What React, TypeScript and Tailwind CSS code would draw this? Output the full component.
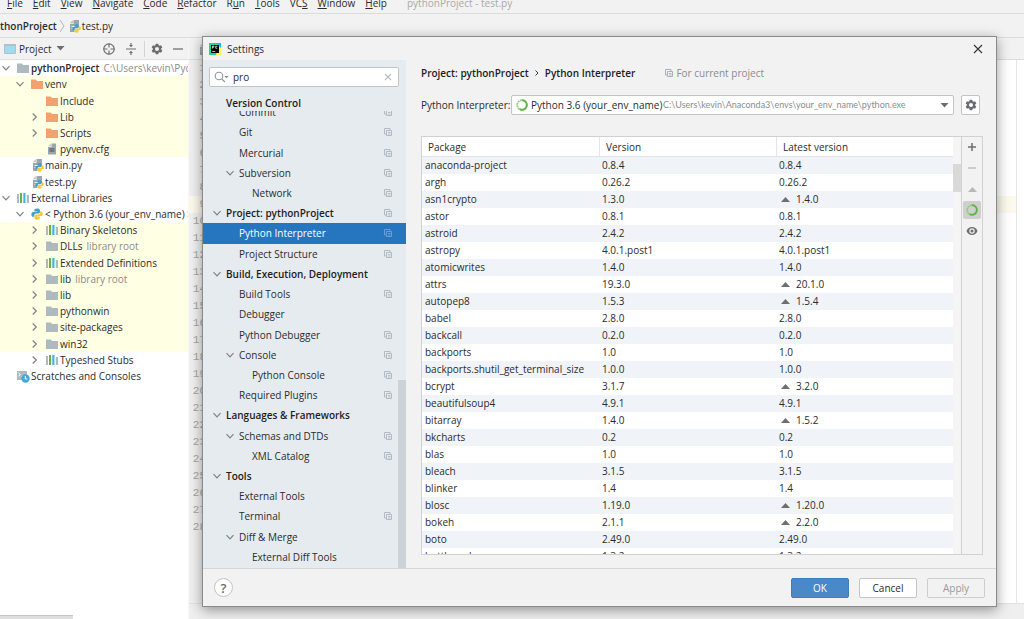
import type { ReactNode } from "react"
import clsx from "clsx"

type TreeItem = {
  label: string
  level: 0 | 1 | 2
  icon: "folder" | "orange" | "file" | "py" | "lib" | "python" | "scratch"
  chevron?: "open" | "closed"
  note?: string
  bold?: boolean
  tinted?: boolean
}

const tree: TreeItem[] = [
  { label: "pythonProject", level: 0, icon: "folder", chevron: "open", note: "C:\\Users\\kevin\\PycharmProjects", bold: true },
  { label: "venv", level: 1, icon: "orange", chevron: "open", tinted: true },
  { label: "Include", level: 2, icon: "orange", tinted: true },
  { label: "Lib", level: 2, icon: "orange", chevron: "closed", tinted: true },
  { label: "Scripts", level: 2, icon: "orange", chevron: "closed", tinted: true },
  { label: "pyvenv.cfg", level: 2, icon: "file", tinted: true },
  { label: "main.py", level: 1, icon: "py" },
  { label: "test.py", level: 1, icon: "py" },
  { label: "External Libraries", level: 0, icon: "lib", chevron: "open" },
  { label: "< Python 3.6 (your_env_name) >", level: 1, icon: "python", chevron: "open" },
  { label: "Binary Skeletons", level: 2, icon: "lib", chevron: "closed", tinted: true },
  { label: "DLLs", level: 2, icon: "folder", chevron: "closed", note: "library root", tinted: true },
  { label: "Extended Definitions", level: 2, icon: "lib", chevron: "closed", tinted: true },
  { label: "lib", level: 2, icon: "folder", chevron: "closed", note: "library root", tinted: true },
  { label: "lib", level: 2, icon: "folder", chevron: "closed", tinted: true },
  { label: "pythonwin", level: 2, icon: "folder", chevron: "closed", tinted: true },
  { label: "site-packages", level: 2, icon: "folder", chevron: "closed", tinted: true },
  { label: "win32", level: 2, icon: "folder", chevron: "closed", tinted: true },
  { label: "Typeshed Stubs", level: 2, icon: "lib", chevron: "closed" },
  { label: "Scratches and Consoles", level: 0, icon: "scratch" },
]

type NavItem = { label: string; level: 0 | 1 | 2; open?: boolean; copy?: boolean; selected?: boolean }

const nav: NavItem[] = [
  { label: "Commit", level: 1, copy: true },
  { label: "Git", level: 1, copy: true },
  { label: "Mercurial", level: 1, copy: true },
  { label: "Subversion", level: 1, open: true, copy: true },
  { label: "Network", level: 2, copy: true },
  { label: "Project: pythonProject", level: 0, open: true, copy: true },
  { label: "Python Interpreter", level: 1, copy: true, selected: true },
  { label: "Project Structure", level: 1, copy: true },
  { label: "Build, Execution, Deployment", level: 0, open: true },
  { label: "Build Tools", level: 1, copy: true },
  { label: "Debugger", level: 1 },
  { label: "Python Debugger", level: 1, copy: true },
  { label: "Console", level: 1, open: true, copy: true },
  { label: "Python Console", level: 2, copy: true },
  { label: "Required Plugins", level: 1, copy: true },
  { label: "Languages & Frameworks", level: 0, open: true },
  { label: "Schemas and DTDs", level: 1, open: true, copy: true },
  { label: "XML Catalog", level: 2, copy: true },
  { label: "Tools", level: 0, open: true },
  { label: "External Tools", level: 1 },
  { label: "Terminal", level: 1, copy: true },
  { label: "Diff & Merge", level: 1, open: true },
  { label: "External Diff Tools", level: 2 },
]

// name, installed version, latest version when it differs
const packages: [string, string, string?][] = [
  ["anaconda-project", "0.8.4"],
  ["argh", "0.26.2"],
  ["asn1crypto", "1.3.0", "1.4.0"],
  ["astor", "0.8.1"],
  ["astroid", "2.4.2"],
  ["astropy", "4.0.1.post1"],
  ["atomicwrites", "1.4.0"],
  ["attrs", "19.3.0", "20.1.0"],
  ["autopep8", "1.5.3", "1.5.4"],
  ["babel", "2.8.0"],
  ["backcall", "0.2.0"],
  ["backports", "1.0"],
  ["backports.shutil_get_terminal_size", "1.0.0"],
  ["bcrypt", "3.1.7", "3.2.0"],
  ["beautifulsoup4", "4.9.1"],
  ["bitarray", "1.4.0", "1.5.2"],
  ["bkcharts", "0.2"],
  ["blas", "1.0"],
  ["bleach", "3.1.5"],
  ["blinker", "1.4"],
  ["blosc", "1.19.0", "1.20.0"],
  ["bokeh", "2.1.1", "2.2.0"],
  ["boto", "2.49.0"],
  ["bottleneck", "1.3.2"],
]

const menus = ["File", "Edit", "View", "Navigate", "Code", "Refactor", "Run", "Tools", "VCS", "Window", "Help"]
const mnemonics = [0, 0, 0, 0, 0, 0, 1, 0, 2, 0, 0]

const treeIndent = ["pl-0", "pl-[14px]", "pl-[29px]"]
const navIndent = ["pl-[8px]", "pl-[21px]", "pl-[34px]"]

function Chevron({ open }: { open: boolean }) {
  return (
    <svg viewBox="0 0 12 12" className="size-3 shrink-0" fill="none" stroke="#7f8285" strokeWidth="1.2">
      <path d={open ? "M2.5 4.2 6 7.8l3.5-3.6" : "M3.7 2.5 7.3 6 3.7 9.5"} />
    </svg>
  )
}

function Folder({ color }: { color: string }) {
  return (
    <svg viewBox="0 0 12 12" className="size-3 shrink-0">
      <path d="M0 1.5h4.6L6.2 3H12v8H0z" fill={color} />
    </svg>
  )
}

function PythonLogo({ className }: { className?: string }) {
  return (
    <svg viewBox="0 0 16 16" className={className}>
      <path
        d="M7.9.5C4.900.5 4.500 1.600 4.500 3v1.800h3.700v.6H3C1.400 5.400.5 6.600.5 8.600c0 2 1 3.100 2.400 3.100h1.400V9.900c0-1.400 1.100-2.500 2.500-2.500h3c1.200 0 2.100-.9 2.100-2.100V3C11.900 1.400 10.400.5 7.900.5z"
        fill="#3f9fcf"
      />
      <path
        d="M8.300 15.600c3 0 3.400-1.100 3.400-2.500v-1.800H8v-.6h5.200c1.600 0 2.400-1.200 2.400-3.200 0-2-1-3.100-2.400-3.100h-1v1.900c0 1.400-1.100 2.500-2.500 2.500h-3c-1.200 0-2.100.9-2.100 2.100v2.200c0 1.600 1.200 2.500 3.700 2.500z"
        fill="#fcca24"
      />
    </svg>
  )
}

function PyFile() {
  return (
    <span className="relative size-3 shrink-0">
      <svg viewBox="0 0 12 12" className="size-3">
        <path d="M5.5 0H11v7H6.500v5H2V4h3.500z" fill="#9aa7b0" />
        <path d="M4.800.2v3H1.800z" fill="#9aa7b0" opacity=".7" />
        <path d="M3.500 6.500h4M3.500 8.500h2" stroke="#fff" strokeWidth=".8" />
      </svg>
      <PythonLogo className="absolute top-1 left-1 size-[9px]" />
    </span>
  )
}

function TreeIcon({ icon }: { icon: TreeItem["icon"] }) {
  switch (icon) {
    case "folder":
      return <Folder color="#aeb9c0" />
    case "orange":
      return <Folder color="#f4a171" />
    case "py":
      return <PyFile />
    case "python":
      return <PythonLogo className="size-3 shrink-0" />
    case "file":
      return (
        <svg viewBox="0 0 12 12" className="size-3 shrink-0">
          <path d="M5.500.5H10v11H2V4h3.500z" fill="#9aa7b0" />
          <path d="M4.800.7v2.600H2.100z" fill="#9aa7b0" opacity=".7" />
          <path d="M3.500 6h5M3.500 8h5" stroke="#3e4347" strokeWidth=".9" />
        </svg>
      )
    case "lib":
      return (
        <svg viewBox="0 0 12 12" className="size-3 shrink-0">
          <path d="M0 2h2v9H0zM9.800 3H12v8H9.800z" fill="#aeb9c0" />
          <path d="M3 1h2v10H3z" fill="#62b543" />
          <path d="M6.300 1h2.200v10H6.300z" fill="#40b6e0" />
        </svg>
      )
    case "scratch":
      return (
        <svg viewBox="0 0 12 12" className="size-3 shrink-0 overflow-visible">
          <path d="M0 1h10v9H0z" fill="#aeb9c0" />
          <path d="m1.500 3 2 1.500-2 1.500M4.500 6.500h2" fill="none" stroke="#fff" />
          <circle cx="8.500" cy="8.500" r="4.200" fill="#3ea9dc" />
          <path d="M8.300 6v3h2" fill="none" stroke="#fff" />
        </svg>
      )
  }
}

function CopyIcon({ className }: { className?: string }) {
  return (
    <svg viewBox="0 0 8 8" className={clsx("size-2 shrink-0", className)} fill="none" stroke="currentColor">
      <path d="M6 2V.5H.5V6H2" />
      <path d="M2.500 2.500h5v5h-5z" />
      <path d="M4 4.500h2.500M4 6h2.500" strokeWidth=".9" />
    </svg>
  )
}

function Gear({ className }: { className?: string }) {
  return (
    <svg viewBox="0 0 16 16" className={clsx("shrink-0", className)}>
      <path
        fillRule="evenodd"
        fill="#6a6d70"
        d="M6.300 1h3.400l.4 2.100 1.300.7 2-.7 1.700 2.900-1.600 1.400v1.200l1.600 1.400-1.700 2.900-2-.7-1.300.7L9.700 15H6.300l-.4-2.100-1.300-.7-2 .7L.9 10l1.600-1.400V7.400L.9 6l1.700-2.900 2 .7 1.300-.7zM8 5.300a2.700 2.700 0 1 0 0 5.400 2.700 2.700 0 0 0 0-5.400z"
      />
    </svg>
  )
}

function Ring() {
  return (
    <svg viewBox="0 0 12 12" className="size-3 shrink-0" fill="none" strokeWidth="1.8">
      <circle cx="6" cy="6" r="4.800" stroke="#8fcc7c" strokeDasharray="1.900 .6" />
      <path d="M6 1.200a4.800 4.800 0 1 1-2.400 8.950" stroke="#5fb548" />
    </svg>
  )
}

function Triangle({ className, down }: { className?: string; down?: boolean }) {
  return (
    <svg viewBox="0 0 9 5" className={clsx("h-[5px] w-[9px] shrink-0", className)} fill="currentColor">
      <path d={down ? "M.5 0h8l-4 4.500z" : "M0 5h9L4.500 0z"} />
    </svg>
  )
}

function MenuBar() {
  return (
    <nav className="flex h-[14px] shrink-0 items-end overflow-hidden border-b border-[#dcdcdc] pb-[2px] pl-[7px]">
      {menus.map((name, i) => (
        <button key={name} className="mr-[10px] whitespace-pre">
          {name.slice(0, mnemonics[i])}
          <u>{name[mnemonics[i]]}</u>
          {name.slice(mnemonics[i] + 1)}
        </button>
      ))}
      <span className="pl-[10px] text-[#a9a9a9]">pythonProject - test.py</span>
    </nav>
  )
}

function ProjectPanel() {
  return (
    <aside className="flex w-[188px] shrink-0 flex-col bg-white">
      <div className="flex h-[22px] shrink-0 items-center border-b border-[#e0e0e0] bg-[#f2f2f2] pl-1">
        <svg viewBox="0 0 12 12" className="size-3">
          <path d="M.5 1.500h11v9H.5z" fill="#9ddcf2" stroke="#b5bfc6" />
          <path d="M0 1h12v2H0z" fill="#b5bfc6" />
        </svg>
        <span className="ml-[3px]">Project</span>
        <Triangle down className="ml-1 text-[#6e6e6e]" />
        <span className="flex-1" />
        <button aria-label="Select opened file">
          <svg viewBox="0 0 14 14" className="size-[14px]" fill="none" stroke="#6e6e6e" strokeWidth="1.200">
            <circle cx="7" cy="7" r="5.200" />
            <path d="M7 1.500v4M7 8.500v4M1.500 7h4M8.500 7h4" />
          </svg>
        </button>
        <button aria-label="Collapse all" className="ml-2">
          <svg viewBox="0 0 14 14" className="size-[14px]" fill="#6e6e6e">
            <path d="M2 6.400h10v1.200H2zM6.400 1h1.200v2H9L7 5.200 5 3h1.400zM6.400 13h1.200v-2H9L7 8.800 5 11h1.400z" />
          </svg>
        </button>
        <span className="ml-[6px] h-4 w-px bg-[#d4d4d4]" />
        <button aria-label="Options" className="ml-[6px]">
          <Gear className="size-3" />
        </button>
        <button aria-label="Hide" className="mr-[3px] ml-2">
          <svg viewBox="0 0 14 14" className="size-[14px]" stroke="#6e6e6e" strokeWidth="1.300">
            <path d="M2 7h10" />
          </svg>
        </button>
      </div>
      <ul className="flex h-[324px] flex-col">
        {tree.map((item, i) => (
          <li
            key={i}
            className={clsx(
              "flex flex-1 items-center overflow-hidden whitespace-nowrap",
              treeIndent[item.level],
              item.tinted && "bg-[#ffffe4]",
            )}
          >
            {item.chevron ? <Chevron open={item.chevron === "open"} /> : <span className="w-3 shrink-0" />}
            <span className="mr-[2px] ml-[5px] flex">
              <TreeIcon icon={item.icon} />
            </span>
            <span className={clsx(item.bold && "font-semibold")}>{item.label}</span>
            {item.note && <span className="ml-1 text-[#8c8c8c]">{item.note}</span>}
          </li>
        ))}
      </ul>
      <div className="mt-auto h-1 w-[73px] border-t border-[#c4c4c4] bg-[#dedede]" />
    </aside>
  )
}

function Editor() {
  return (
    <main className="flex min-w-0 flex-1 flex-col border-l border-[#f8f8f8]">
      <div className="flex h-[22px] shrink-0 items-center border-b border-[#dcdcdc] pl-[9px]">
        <PyFile />
      </div>
      <div className="flex flex-1 bg-white">
        <ol className="w-[17px] shrink-0 bg-[#f0f0f0] font-['Liberation_Mono',monospace] text-[11px] leading-[17px] text-[#a5a5a5]">
          {Array.from({ length: 28 }, (_, i) => (
            <li key={i} className={clsx("text-right", i === 8 && "bg-[#fcfaed]")}>
              {i + 1}
            </li>
          ))}
        </ol>
        <div className="mr-[7px] flex-1 border-r border-[#e4e4e4] pt-[136px]">
          <div className="h-[17px] bg-[#fcfaed]" />
        </div>
      </div>
      <div className="h-4 shrink-0 border-t border-[#e2e2e2] bg-[#efefef]" />
    </main>
  )
}

function SettingsNav() {
  return (
    <div className="relative flex w-[203px] shrink-0 flex-col bg-[#e6ebf0]">
      <label className="mx-[6px] mt-[7px] flex h-5 w-[190px] shrink-0 items-center rounded-xs border border-[#c4c4c4] bg-white px-1">
        <svg viewBox="0 0 16 12" className="h-3 w-4" fill="none" stroke="#8c959b" strokeWidth="1.100">
          <circle cx="5" cy="5" r="3.800" />
          <path d="m7.800 7.800 3 3.200" />
          <path d="M10.500 5h4l-2 2.200z" fill="#7f8b91" stroke="none" />
        </svg>
        <input aria-label="Search settings" defaultValue="pro" className="ml-[3px] min-w-0 flex-1 outline-none" />
        <button aria-label="Clear">
          <svg viewBox="0 0 12 12" className="size-3" stroke="#b9bdc1" strokeWidth="1.100">
            <path d="m3 3 6 6M9 3 3 9" />
          </svg>
        </button>
      </label>
      <h2 className="flex h-6 shrink-0 items-end pl-[23px] font-semibold text-[#1d1d1d]">Version Control</h2>
      <div className="min-h-0 flex-1 overflow-hidden">
        <ul className="-mt-[9px] flex h-[465px] flex-col">
          {nav.map((item) => (
            <li
              key={item.label}
              className={clsx(
                "flex flex-1 items-center pr-[14px]",
                navIndent[item.level],
                item.level === 0 && "font-semibold text-[#1d1d1d]",
                item.selected && "bg-[#2675bf] text-white",
              )}
            >
              {item.open ? <Chevron open /> : <span className="w-3" />}
              <a href="#" className="ml-[3px] flex-1">
                {item.label}
              </a>
              {item.copy && <CopyIcon className={item.selected ? "text-[#6a9fd2]" : "text-[#b3bbc2]"} />}
            </li>
          ))}
        </ul>
      </div>
      <div className="absolute right-0 bottom-0 h-[188px] w-2 bg-[#cdd2d8]" />
    </div>
  )
}

function SideButton({ label, active, children }: { label: string; active?: boolean; children: ReactNode }) {
  return (
    <button
      aria-label={label}
      className={clsx("flex size-[18px] items-center justify-center rounded-xs", active && "bg-[#cfcfcf]")}
    >
      {children}
    </button>
  )
}

function PackageTable() {
  return (
    <div className="flex min-h-0 flex-1 overflow-hidden border border-[#d1d1d1]">
      <div className="flex-1 overflow-hidden bg-white">
        <table className="w-full table-fixed border-separate border-spacing-0 text-left">
          <thead>
            <tr className="h-5">
              <th className="border-b border-[#e4e4e4] pl-[6px] font-normal">Package</th>
              <th className="border-b border-l border-[#e4e4e4] pl-[6px] font-normal">Version</th>
              <th className="border-b border-l border-[#e4e4e4] pl-[6px] font-normal">Latest version</th>
            </tr>
          </thead>
          <tbody>
            {packages.map(([name, version, latest]) => (
              <tr key={name} className="h-[17px] leading-[17px] odd:bg-[#f0f4f9]">
                <td className="pl-[3px]">{name}</td>
                <td className="pl-[3px]">{version}</td>
                <td className="pl-[3px]">
                  {latest ? (
                    <span className="flex items-center gap-[6px] pl-[2px]">
                      <Triangle className="text-[#6e6e6e]" />
                      {latest}
                    </span>
                  ) : (
                    version
                  )}
                </td>
              </tr>
            ))}
          </tbody>
        </table>
      </div>
      <div className="w-2 shrink-0 bg-[#f5f5f5] pt-[27px]">
        <div className="h-7 bg-[#d9d9d9]" />
      </div>
      <div className="flex w-[21px] shrink-0 flex-col items-center gap-[3px] border-l border-[#d1d1d1] pt-px">
        <SideButton label="Install">
          <svg viewBox="0 0 10 10" className="size-[10px]" stroke="#6e6e6e" strokeWidth="1.500">
            <path d="M1 5h8M5 1v8" />
          </svg>
        </SideButton>
        <SideButton label="Uninstall">
          <svg viewBox="0 0 10 10" className="size-[10px]" stroke="#b8b8b8" strokeWidth="1.300">
            <path d="M1 5h8" />
          </svg>
        </SideButton>
        <SideButton label="Upgrade">
          <Triangle className="text-[#b8b8b8]" />
        </SideButton>
        <SideButton label="Use Conda package manager" active>
          <Ring />
        </SideButton>
        <SideButton label="Show early releases">
          <svg viewBox="0 0 12 10" className="h-[10px] w-3">
            <path d="M6 1C3.200 1 1.200 3 .5 5c.7 2 2.700 4 5.500 4s4.800-2 5.500-4C10.800 3 8.800 1 6 1z" fill="#6e6e6e" />
            <circle cx="6" cy="5" r="2.700" fill="#f2f2f2" />
            <circle cx="6" cy="5" r="1.500" fill="#6e6e6e" />
          </svg>
        </SideButton>
      </div>
    </div>
  )
}

function InterpreterPage() {
  return (
    <section className="flex min-w-0 flex-1 flex-col pr-[13px] pb-[13px] pl-[15px]">
      <div className="mt-[5px] flex h-4 shrink-0 items-center font-semibold text-[#1d1d1d]">
        <span>Project: pythonProject</span>
        <svg viewBox="0 0 6 8" className="mx-[5px] h-2 w-[6px]" fill="none" stroke="#333">
          <path d="m1.500 1.500 2.500 2.500-2.500 2.500" />
        </svg>
        <span>Python Interpreter</span>
        <CopyIcon className="ml-[30px] text-[#a9b1b7]" />
        <span className="ml-[3px] font-normal text-[#8c8c8c]">For current project</span>
      </div>
      <div className="mt-[14px] flex h-5 shrink-0 items-center pr-[3px]">
        <label htmlFor="interpreter" className="w-[90px] shrink-0">
          Python Interpreter:
        </label>
        <div className="flex h-5 flex-1 items-center rounded-xs border border-[#c4c4c4] bg-white px-1">
          <Ring />
          <select id="interpreter" className="ml-[3px] appearance-none bg-transparent outline-none">
            <option>Python 3.6 (your_env_name)</option>
          </select>
          <span className="flex-1 font-['Lato',sans-serif] text-[9px] text-[#8c8c8c]">
            C:\Users\kevin\Anaconda3\envs\your_env_name\python.exe
          </span>
          <Triangle down className="text-[#6e6e6e]" />
        </div>
        <button
          aria-label="Interpreter settings"
          className="ml-[7px] flex h-5 w-[19px] items-center justify-center rounded-xs border border-[#c4c4c4] bg-white"
        >
          <Gear className="size-3" />
        </button>
      </div>
      <div className="mt-[21px] flex min-h-0 flex-1">
        <PackageTable />
      </div>
    </section>
  )
}

function SettingsDialog() {
  return (
    <div
      role="dialog"
      aria-label="Settings"
      className="absolute top-9 right-[27px] bottom-3 left-[202px] flex flex-col border border-[#8a8a8a] bg-[#f2f2f2] shadow-[0_3px_12px_rgba(0,0,0,0.4)]"
    >
      <header className="flex h-[23px] shrink-0 items-center pr-3 pl-[6px]">
        <svg viewBox="0 0 12 12" className="size-3">
          <path d="M0 0h12v12H0z" fill="#21d789" />
          <path d="M9 3h3v9H7z" fill="#fcf84a" />
          <path d="M7 0h5v5z" fill="#07c3f2" />
          <path d="M2 2h8v8H2z" fill="#000" />
          <path d="M3.500 5.500V3h1.300v1.300H3.500M8.300 3.300H6.700v1.900h1.600M3.200 8.500h3" fill="none" stroke="#fff" strokeWidth=".7" />
        </svg>
        <h1 className="ml-[6px] flex-1">Settings</h1>
        <button aria-label="Close">
          <svg viewBox="0 0 12 12" className="size-3" stroke="#333" strokeWidth="1.100">
            <path d="m2 2 8 8M10 2l-8 8" />
          </svg>
        </button>
      </header>
      <div className="flex min-h-0 flex-1">
        <SettingsNav />
        <InterpreterPage />
      </div>
      <footer className="flex h-[38px] shrink-0 items-center gap-[10px] border-t border-[#d6d6d6] px-[11px]">
        <button
          aria-label="Help"
          className="mr-auto flex size-[19px] items-center justify-center rounded-full border border-[#c4c4c4] bg-white text-[13px] font-semibold text-[#6e6e6e]"
        >
          ?
        </button>
        <button className="h-5 w-[58px] rounded-xs border border-[#3f7dbd] bg-[#4a88c7] text-white">OK</button>
        <button className="h-5 w-[58px] rounded-xs border border-[#c4c4c4] bg-white">Cancel</button>
        <button disabled className="h-5 w-[58px] rounded-xs border border-[#cfcfcf] text-[#9a9a9a]">
          Apply
        </button>
      </footer>
    </div>
  )
}

export default function App() {
  return (
    <div className="relative flex h-screen flex-col overflow-hidden bg-[#f2f2f2] font-['Open_Sans',sans-serif] text-[10px] leading-4 text-[#2b2b2b]">
      <MenuBar />
      <div className="flex h-6 shrink-0 items-center overflow-hidden border-b border-[#dcdcdc]">
        <span className="font-semibold">thonProject</span>
        <svg viewBox="0 0 6 14" className="mr-[3px] ml-[2px] h-[14px] w-[6px]" fill="none" stroke="#b5b5b5">
          <path d="m1 1 4 6-4 6" />
        </svg>
        <PyFile />
        <span className="ml-[2px]">test.py</span>
      </div>
      <div className="flex min-h-0 flex-1">
        <ProjectPanel />
        <Editor />
      </div>
      <SettingsDialog />
    </div>
  )
}
